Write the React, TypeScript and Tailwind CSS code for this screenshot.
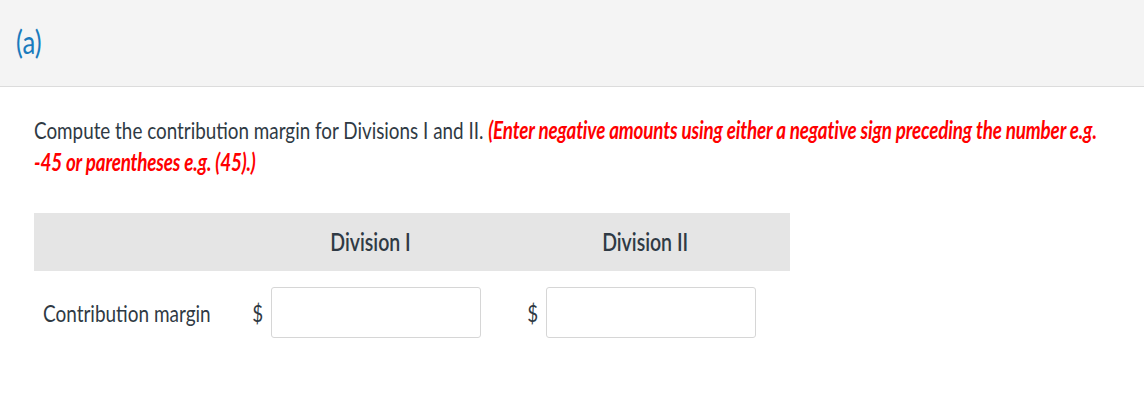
export default function App() {
  return (
    <div className="w-[1144px] h-[401px] bg-white overflow-hidden" style={{ fontFamily: "Lato, 'Noto Sans', sans-serif" }}>
      <div className="h-[87px] bg-[#f4f4f4] border-b border-[#dcdcdc] flex items-start pl-[16px] pt-[19px]">
        <span className="inline-block origin-left scale-x-[0.78] text-[33px] leading-[44px] text-[#1a7bbd]">(a)</span>
      </div>
      <div className="pl-[34px] pt-[27px]">
        <div className="w-[1365px] origin-top-left scale-x-[0.785] text-[24px] leading-[32px] text-[#2f3a44]">
          Compute the contribution margin for Divisions I and II.{" "}
          <span className="text-[#ff0000] font-bold italic tracking-[-0.2px]">
            (Enter negative amounts using either a negative sign preceding the number e.g. -45 or parentheses e.g. (45).)
          </span>
        </div>
      </div>
      <div className="ml-[34px] mt-[35px] w-[756px]">
        <div className="grid grid-cols-[199px_275px_275px_1fr] h-[58px] bg-[#e5e5e5] items-center text-[#2f3a44]">
          <div />
          <div className="flex justify-center">
            <span className="inline-block scale-x-[0.78] text-[25px] font-semibold">Division I</span>
          </div>
          <div className="flex justify-center">
            <span className="inline-block scale-x-[0.78] text-[25px] font-semibold">Division II</span>
          </div>
          <div />
        </div>
        <div className="grid grid-cols-[199px_275px_275px_1fr] mt-[16px] items-center text-[#2f3a44]">
          <div className="pl-[9px]">
            <span className="inline-block origin-left scale-x-[0.79] text-[24px] whitespace-nowrap">Contribution margin</span>
          </div>
          <div className="flex items-center pl-[17px]">
            <span className="w-[21px] inline-block scale-x-[0.78] text-[24px]">$</span>
            <div className="w-[210px] h-[51px] border border-[#d6d6d6] rounded-[3px] bg-white" />
          </div>
          <div className="flex items-center pl-[17px]">
            <span className="w-[21px] inline-block scale-x-[0.78] text-[24px]">$</span>
            <div className="w-[210px] h-[51px] border border-[#d6d6d6] rounded-[3px] bg-white" />
          </div>
          <div />
        </div>
      </div>
    </div>
  );
}
